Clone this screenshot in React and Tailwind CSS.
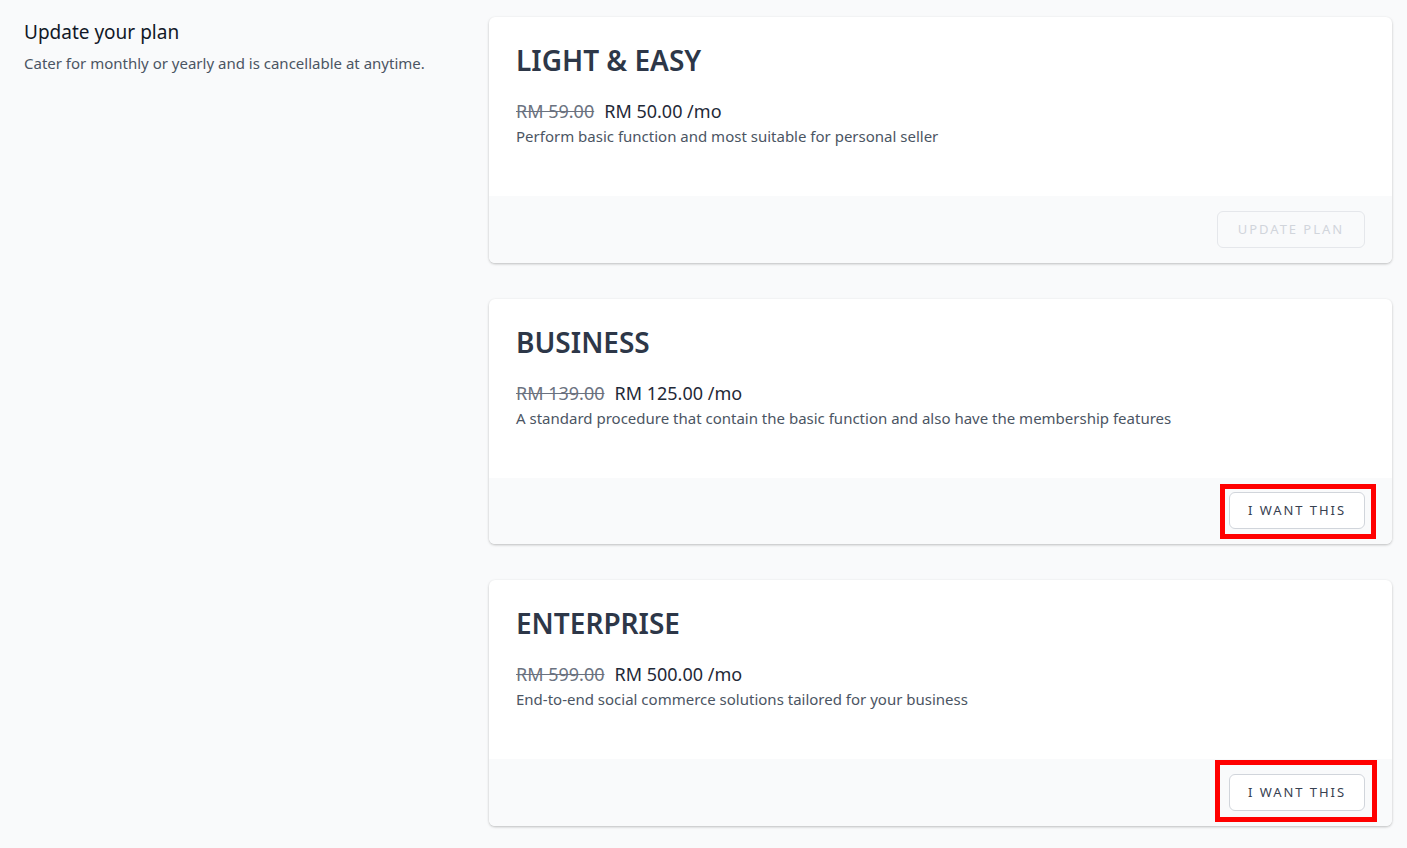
import React from 'react';

const plans = [
  {
    name: 'LIGHT & EASY',
    oldPrice: 'RM 59.00',
    price: 'RM 50.00 /mo',
    desc: 'Perform basic function and most suitable for personal seller',
    current: true,
  },
  {
    name: 'BUSINESS',
    oldPrice: 'RM 139.00',
    price: 'RM 125.00 /mo',
    desc: 'A standard procedure that contain the basic function and also have the membership features',
    mark: 'left-[731px] top-[185px] w-[156px] h-[55px]',
  },
  {
    name: 'ENTERPRISE',
    oldPrice: 'RM 599.00',
    price: 'RM 500.00 /mo',
    desc: 'End-to-end social commerce solutions tailored for your business',
    mark: 'left-[726px] top-[180px] w-[162px] h-[62px]',
  },
];

const PlanCard = ({ plan }) => {
  return (
    <div className="relative bg-white rounded-md shadow-[0_1px_3px_rgba(0,0,0,0.18),0_1px_2px_rgba(0,0,0,0.08)]">
      {/* Body */}
      <div className="h-[179px] px-[27px] pt-[25px]">
        <h2 className="text-[28px] leading-[36px] font-semibold text-[#2d3748]">{plan.name}</h2>
        <div className="mt-[21px] flex items-baseline gap-[10px] text-[18px] leading-[24px]">
          <span className="line-through text-[#6b7280]">{plan.oldPrice}</span>
          <span className="text-[#1f2937]">{plan.price}</span>
        </div>
        <p className="mt-[2px] text-[15px] leading-[22px] text-[#4b5563]">{plan.desc}</p>
      </div>

      {/* Footer */}
      <div className="h-[66.5px] bg-[#f9fafb] rounded-b-md flex items-center justify-end pr-[27px]">
        {plan.current ? (
          <button
            disabled
            className="h-[37px] px-[20px] rounded-md border border-[#e5e7eb] bg-[#f9fafb] text-[13px] tracking-[0.15em] text-[#d1d5db]"
          >
            UPDATE PLAN
          </button>
        ) : (
          <button className="h-[37px] px-[18px] rounded-md border border-[#d1d5db] bg-white text-[13px] tracking-[0.15em] text-[#374151]">
            I WANT THIS
          </button>
        )}
      </div>

      {plan.mark && (
        <div className={`absolute border-[5px] border-[#ff0000] pointer-events-none ${plan.mark}`}></div>
      )}
    </div>
  );
};

const App = () => {
  return (
    <div
      className="min-h-screen bg-[#f9fafb] pl-6 pr-[15px] pt-[17px] pb-[23px] flex gap-6"
      style={{ fontFamily: '"Noto Sans", "Open Sans", sans-serif' }}
    >
      {/* Left description */}
      <div className="w-[441px] shrink-0">
        <h3 className="text-[19px] leading-[30px] text-[#111827]">Update your plan</h3>
        <p className="mt-[5px] text-[15px] leading-[22px] text-[#4b5563]">
          Cater for monthly or yearly and is cancellable at anytime.
        </p>
      </div>

      {/* Plans */}
      <div className="flex-1 flex flex-col gap-9">
        {plans.map((plan) => (
          <PlanCard key={plan.name} plan={plan} />
        ))}
      </div>
    </div>
  );
};

export default App;
